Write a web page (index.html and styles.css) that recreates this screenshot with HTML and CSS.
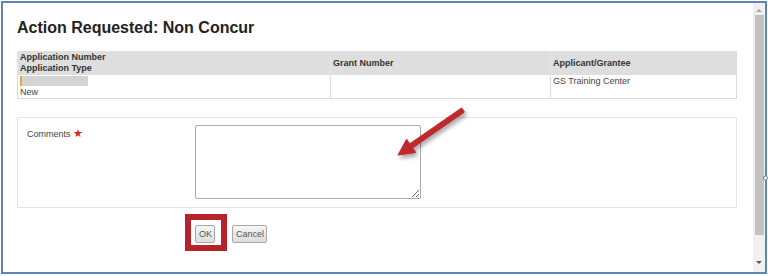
FILE: index.html
```html
<!DOCTYPE html>
<html lang="en">
<head>
    <meta charset="UTF-8">
    <title>Action Requested: Non Concur</title>
    <link rel="stylesheet" href="styles.css">
</head>
<body>
    <div class="frame">
        <div class="dialog">
            <h1 class="dialog-title">Action Requested: Non Concur</h1>

            <table class="app-table">
                <thead>
                    <tr>
                        <th class="col-app">Application Number<br>Application Type</th>
                        <th class="col-grant">Grant Number</th>
                        <th class="col-grantee">Applicant/Grantee</th>
                    </tr>
                </thead>
                <tbody>
                    <tr>
                        <td><span class="redacted"></span><br>New</td>
                        <td></td>
                        <td>GS Training Center</td>
                    </tr>
                </tbody>
            </table>

            <div class="comments-panel">
                <label class="comments-label" for="comments">Comments <span class="required">&#9733;</span></label>
                <textarea id="comments" class="comments-box"></textarea>
            </div>

            <div class="actions">
                <button class="btn btn-ok">OK</button>
                <button class="btn btn-cancel">Cancel</button>
            </div>
        </div>

        <div class="scrollbar">
            <span class="scroll-arrow up"></span>
            <div class="scroll-thumb"></div>
            <span class="scroll-arrow down"></span>
        </div>
    </div>

    <!-- callout annotations drawn over the screenshot -->
    <svg class="callouts" width="768" height="276" viewBox="0 0 768 276">
        <polygon class="arrow" points="461.6,107.9 409.8,143.8 406.6,139.3 398,155 415.8,152.5 412.6,148 464.4,112.1" />
        <rect class="ok-highlight" x="188" y="217" width="36" height="31" />
        <circle class="grip" cx="765.5" cy="178" r="2" />
    </svg>
</body>
</html>
```

FILE: styles.css
```css
/* Page */
body {
    margin: 0;
    font-family: "Liberation Sans", Arial, sans-serif;
    background-color: #ffffff;
    color: #333333;
    width: 768px;
    height: 276px;
    position: relative;
    overflow: hidden;
}

/* Window frame */
.frame {
    margin: 1px;
    height: 273px;
    box-sizing: border-box;
    border: 2px solid #5f86b2;
    display: flex;
}

.dialog {
    flex: 1;
    padding: 0 16px 0 14px;
}

.dialog-title {
    margin: 15px 0 14px;
    font-size: 16px;
    line-height: 19px;
    font-weight: bold;
    color: #222222;
}

/* Application table */
.app-table {
    width: 720px;
    border-collapse: collapse;
    font-size: 9px;
    line-height: 11px;
}

.app-table th {
    background-color: #dedede;
    text-align: left;
    font-weight: bold;
    color: #333333;
    height: 24px;
    padding: 1px 2px 0;
    box-sizing: border-box;
    vertical-align: middle;
    border-left: 1px solid #e6e6e6;
}

.app-table th.col-app {
    vertical-align: top;
    width: 313px;
}

.app-table th.col-grant {
    width: 220px;
}

.app-table td {
    height: 22px;
    padding: 1px 2px 0;
    box-sizing: border-box;
    vertical-align: top;
    color: #444444;
    border: 1px solid #dcdcdc;
    border-top: none;
}

.redacted {
    display: inline-block;
    width: 68px;
    height: 10px;
    vertical-align: top;
    background: linear-gradient(90deg, #f0a040 0, #f0a040 2px, #d4d4d4 2px);
}

/* Comments */
.comments-panel {
    margin-top: 18px;
    width: 720px;
    box-sizing: border-box;
    border: 1px solid #e4e4e4;
    padding: 7px 9px 8px;
    display: flex;
}

.comments-label {
    width: 168px;
    padding-top: 3px;
    font-size: 9px;
    line-height: 11px;
    color: #444444;
}

.required {
    color: #e21a22;
    font-family: "DejaVu Sans", sans-serif;
    font-size: 11px;
    line-height: 11px;
}

.comments-box {
    width: 226px;
    height: 74px;
    box-sizing: border-box;
    margin: 0;
    border: 1px solid #ababab;
    border-radius: 2px;
    background-color: #ffffff;
}

/* Buttons */
.actions {
    margin-top: 17px;
    padding-left: 178px;
    display: flex;
    gap: 17px;
}

.btn {
    height: 18px;
    padding: 0 3px;
    font-family: "Liberation Sans", Arial, sans-serif;
    font-size: 9px;
    color: #555555;
    border: 1px solid #a8a8a8;
    border-radius: 2px;
    background: linear-gradient(#f6f6f6, #dddddd);
}

.btn-ok {
    width: 20px;
}

.btn-cancel {
    width: 35px;
}

/* Scrollbar */
.scrollbar {
    width: 12px;
    background-color: #f0f0f0;
    display: flex;
    flex-direction: column;
    align-items: center;
}

.scroll-arrow {
    width: 0;
    height: 0;
    border-left: 3px solid transparent;
    border-right: 3px solid transparent;
}

.scroll-arrow.up {
    margin-top: 6px;
    border-bottom: 3px solid #a3a3a3;
}

.scroll-arrow.down {
    margin-top: 26px;
    border-top: 3px solid #5a5a5a;
}

.scroll-thumb {
    width: 9px;
    height: 220px;
    margin-top: 3px;
    background-color: #c2c2c2;
}

/* Annotation layer */
.callouts {
    position: absolute;
    top: 0;
    left: 0;
    pointer-events: none;
}

.arrow {
    fill: #c0282e;
    stroke: #c0282e;
    stroke-width: 1;
    stroke-linejoin: round;
    filter: drop-shadow(2px 3px 2px rgba(0, 0, 0, 0.35));
}

.ok-highlight {
    fill: none;
    stroke: #b5232b;
    stroke-width: 6;
}

.grip {
    fill: #ffffff;
    stroke: #7a7a7a;
    stroke-width: 1;
}
```
